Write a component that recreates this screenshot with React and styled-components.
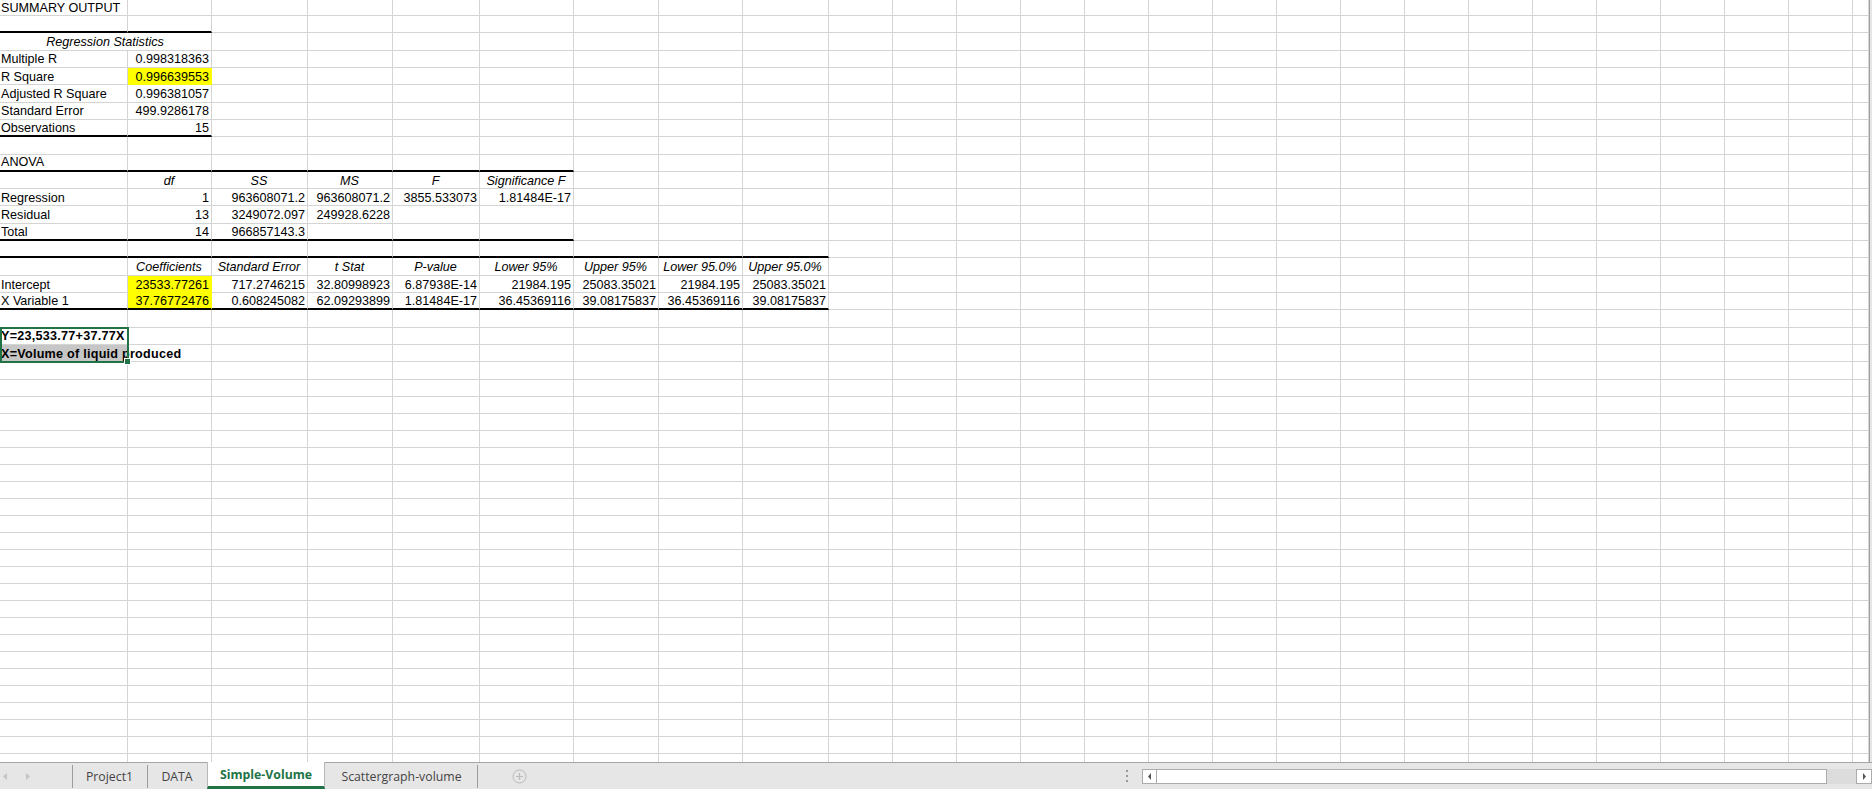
import React from 'react';
import styled, { createGlobalStyle } from 'styled-components';

const GlobalStyle = createGlobalStyle`
  html, body {
    margin: 0;
    padding: 0;
    background: #fff;
    overflow: hidden;
  }
  body {
    width: 1872px;
    height: 789px;
    font-family: "Liberation Sans", Arial, sans-serif;
  }
`;

const COLS = [128, 84, 96, 85, 87, 94, 85, 84, 86, ...Array(16).fill(64), 16];
const FIRST_ROW = 16;
const TALL_ROW = 17.32; // rows 2..22 carry the output and sit a little taller
const TALL_COUNT = 21;
const ROW_H = 17;
const ROW_COUNT = 45;
const GRID_LINE = '#d4d4d4';
const YELLOW = '#ffff00';
const GREEN = '#217346';

const rowTop = (r) => {
  if (r === 1) return 0;
  const tall = Math.min(r - 2, TALL_COUNT);
  const rest = Math.max(r - 2 - TALL_COUNT, 0);
  return FIRST_ROW + tall * TALL_ROW + rest * ROW_H;
};

// sheet content, keyed by row -> list of [col, text, options]
const R = { align: 'right' };
const H = { align: 'center', italic: true };
const SHEET = {
  1: [[0, 'SUMMARY OUTPUT']],
  3: [[0, 'Regression Statistics', { ...H, span: 2 }]],
  4: [[0, 'Multiple R'], [1, '0.998318363', R]],
  5: [[0, 'R Square'], [1, '0.996639553', { ...R, fill: YELLOW }]],
  6: [[0, 'Adjusted R Square'], [1, '0.996381057', R]],
  7: [[0, 'Standard Error'], [1, '499.9286178', R]],
  8: [[0, 'Observations'], [1, '15', R]],
  10: [[0, 'ANOVA']],
  11: [[1, 'df', H], [2, 'SS', H], [3, 'MS', H], [4, 'F', H], [5, 'Significance F', H]],
  12: [
    [0, 'Regression'], [1, '1', R], [2, '963608071.2', R], [3, '963608071.2', R],
    [4, '3855.533073', R], [5, '1.81484E-17', R],
  ],
  13: [[0, 'Residual'], [1, '13', R], [2, '3249072.097', R], [3, '249928.6228', R]],
  14: [[0, 'Total'], [1, '14', R], [2, '966857143.3', R]],
  16: [
    [1, 'Coefficients', H], [2, 'Standard Error', H], [3, 't Stat', H], [4, 'P-value', H],
    [5, 'Lower 95%', H], [6, 'Upper 95%', H], [7, 'Lower 95.0%', H], [8, 'Upper 95.0%', H],
  ],
  17: [
    [0, 'Intercept'], [1, '23533.77261', { ...R, fill: YELLOW }], [2, '717.2746215', R],
    [3, '32.80998923', R], [4, '6.87938E-14', R], [5, '21984.195', R], [6, '25083.35021', R],
    [7, '21984.195', R], [8, '25083.35021', R],
  ],
  18: [
    [0, 'X Variable 1'], [1, '37.76772476', { ...R, fill: YELLOW }], [2, '0.608245082', R],
    [3, '62.09293899', R], [4, '1.81484E-17', R], [5, '36.45369116', R], [6, '39.08175837', R],
    [7, '36.45369116', R], [8, '39.08175837', R],
  ],
  20: [[0, 'Y=23,533.77+37.77X', { bold: true }]],
  21: [[0, 'X=Volume of liquid produced', { bold: true, fill: '#c6c6c6' }]],
};

// rows whose bottom edge carries a medium black border, and how many columns it spans
const THICK_BOTTOM = { 2: 2, 8: 2, 10: 6, 14: 6, 15: 9, 18: 9 };

const Window = styled.div`
  display: flex;
  flex-direction: column;
  width: 1872px;
  height: 789px;
`;

const SheetArea = styled.div`
  display: flex;
  height: 762px;
`;

const Grid = styled.div`
  position: relative;
  flex: 1;
  overflow: hidden;
  display: grid;
  grid-template-columns: ${COLS.map((w) => `${w}px`).join(' ')};
  grid-template-rows: ${FIRST_ROW}px repeat(${TALL_COUNT}, ${TALL_ROW}px)
    repeat(${ROW_COUNT - 1 - TALL_COUNT}, ${ROW_H}px);
  align-content: start;
`;

const Cell = styled.div`
  box-sizing: border-box;
  grid-column: span ${(p) => p.$span || 1};
  min-width: 0;
  display: flex;
  align-items: flex-end;
  justify-content: ${(p) =>
    p.$align === 'right' ? 'flex-end' : p.$align === 'center' ? 'center' : 'flex-start'};
  padding: 0 2px 0 1px;
  background: ${(p) => p.$fill || 'transparent'};
  border-right: 1px solid ${(p) => p.$fill || GRID_LINE};
  border-bottom: ${(p) => (p.$thick ? '2px solid #000' : `1px solid ${p.$fill || GRID_LINE}`)};
  color: #000;
  font-size: 12.6px;
  line-height: 13.5px;
  font-style: ${(p) => (p.$italic ? 'italic' : 'normal')};
  font-weight: ${(p) => (p.$bold ? 700 : 400)};
  letter-spacing: ${(p) => (p.$bold ? '0.25px' : 'normal')};
  white-space: nowrap;
  overflow: visible;
`;

const Selection = styled.div`
  position: absolute;
  left: 0;
  box-sizing: border-box;
  width: 129px;
  border: 2px solid ${GREEN};
  pointer-events: none;
`;

const FillHandle = styled.div`
  position: absolute;
  right: -4px;
  bottom: -4px;
  width: 5px;
  height: 5px;
  background: ${GREEN};
  border: 1px solid #fff;
`;

const RightEdge = styled.div`
  width: 2px;
  border-left: 1px solid #a0a0a0;
  background: #e6e6e6;
`;

const TabBar = styled.div`
  box-sizing: border-box;
  height: 27px;
  display: flex;
  align-items: stretch;
  background: #e6e6e6;
  border-top: 1px solid #a6a6a6;
  font-family: "Open Sans", "Noto Sans", sans-serif;
  font-size: 12.3px;
  color: #444;
`;

const NavArrows = styled.div`
  width: 72px;
  display: flex;
  align-items: center;
  gap: 19px;
  padding-left: 3px;
  box-sizing: border-box;
`;

const Tab = styled.div`
  box-sizing: border-box;
  width: ${(p) => p.$w}px;
  display: flex;
  align-items: center;
  justify-content: center;
  white-space: nowrap;
  border-left: 1px solid ${(p) => (p.$sepLeft ? '#9c9c9c' : 'transparent')};
  border-right: 1px solid ${(p) => (p.$sepRight ? '#9c9c9c' : 'transparent')};
  margin: 2px 0 1px;
`;

const ActiveTab = styled(Tab)`
  margin: -1px 0 0;
  padding-top: 1px;
  background: #fff;
  color: ${GREEN};
  font-weight: 700;
  border-left: 1px solid #b8b8b8;
  border-right: 1px solid #b8b8b8;
  border-bottom: 3px solid ${GREEN};
`;

const AddSheet = styled.div`
  display: flex;
  align-items: center;
  margin-left: 34px;
`;

const Spacer = styled.div`
  flex: 1;
`;

const Splitter = styled.div`
  width: 17px;
  display: flex;
  flex-direction: column;
  justify-content: center;
  gap: 3px;
  padding-left: 1px;
  box-sizing: border-box;

  span {
    width: 2px;
    height: 2px;
    background: #9a9a9a;
  }
`;

const HScroll = styled.div`
  width: 730px;
  height: 15px;
  margin-top: 6px;
  display: flex;
`;

const ScrollButton = styled.div`
  box-sizing: border-box;
  width: ${(p) => p.$w}px;
  display: flex;
  align-items: center;
  justify-content: center;
  background: #fff;
  border: 1px solid #ababab;
`;

const Thumb = styled.div`
  flex: 1;
  box-sizing: border-box;
  background: #fff;
  border: 1px solid #ababab;
  border-left: none;
`;

const Track = styled.div`
  width: 29px;
  background: #dcdcdc;
`;

const Triangle = ({ dir, color = '#555', w = 4, h = 7 }) => (
  <svg width={w} height={h} viewBox={`0 0 ${w} ${h}`}>
    {dir === 'left' ? (
      <polygon points={`${w},0 0,${h / 2} ${w},${h}`} fill={color} />
    ) : (
      <polygon points={`0,0 ${w},${h / 2} 0,${h}`} fill={color} />
    )}
  </svg>
);

const PlusCircle = () => (
  <svg width="15" height="15" viewBox="0 0 15 15">
    <circle cx="7.5" cy="7.5" r="6.5" fill="none" stroke="#bdbdbd" strokeWidth="1" />
    <path d="M7.5 4v7M4 7.5h7" stroke="#bdbdbd" strokeWidth="1.2" />
  </svg>
);

const buildCells = () => {
  const cells = [];
  for (let r = 1; r <= ROW_COUNT; r += 1) {
    const entries = SHEET[r] || [];
    const thickCols = THICK_BOTTOM[r] || 0;
    let c = 0;
    while (c < COLS.length) {
      const entry = entries.find((e) => e[0] === c);
      const opts = (entry && entry[2]) || {};
      const span = opts.span || 1;
      cells.push(
        <Cell
          key={`${r}-${c}`}
          $span={span}
          $align={opts.align}
          $italic={opts.italic}
          $bold={opts.bold}
          $fill={opts.fill}
          $thick={c < thickCols}
        >
          {entry ? entry[1] : null}
        </Cell>
      );
      c += span;
    }
  }
  return cells;
};

const App = () => {
  const selTop = rowTop(20) - 0.5;
  const selHeight = rowTop(22) - rowTop(20) + 1.5;

  return (
    <Window>
      <GlobalStyle />
      <SheetArea>
        <Grid>
          {buildCells()}
          <Selection style={{ top: selTop, height: selHeight }}>
            <FillHandle />
          </Selection>
        </Grid>
        <RightEdge />
      </SheetArea>
      <TabBar>
        <NavArrows>
          <Triangle dir="left" color="#c4c4c4" />
          <Triangle dir="right" color="#c4c4c4" />
        </NavArrows>
        <Tab $w={75} $sepLeft>Project1</Tab>
        <Tab $w={60} $sepLeft>DATA</Tab>
        <ActiveTab $w={118}>Simple-Volume</ActiveTab>
        <Tab $w={153} $sepRight>Scattergraph-volume</Tab>
        <AddSheet>
          <PlusCircle />
        </AddSheet>
        <Spacer />
        <Splitter>
          <span />
          <span />
          <span />
        </Splitter>
        <HScroll>
          <ScrollButton $w={15}>
            <Triangle dir="left" w={3} h={7} />
          </ScrollButton>
          <Thumb />
          <Track />
          <ScrollButton $w={16}>
            <Triangle dir="right" w={3} h={7} />
          </ScrollButton>
        </HScroll>
      </TabBar>
    </Window>
  );
};

export default App;
